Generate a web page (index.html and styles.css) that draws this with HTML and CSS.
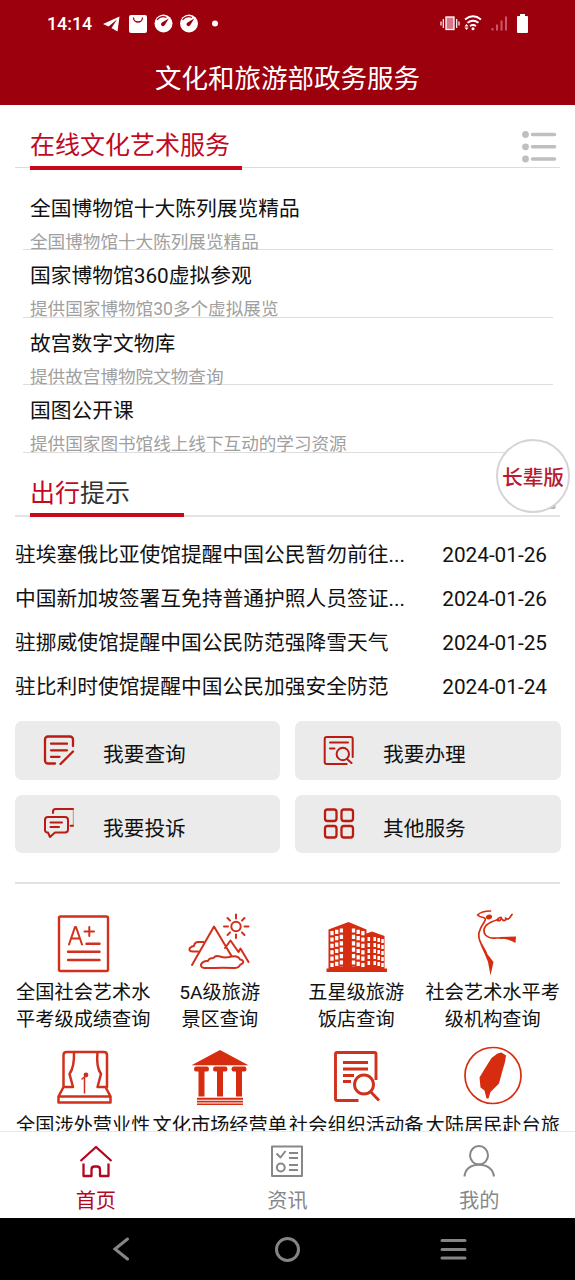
FILE: index.html
```html
<!DOCTYPE html>
<html lang="zh-CN">
<head>
<meta charset="utf-8">
<title>文化和旅游部政务服务</title>
<link rel="stylesheet" href="styles.css">
</head>
<body>
<div class="screen">
  <header class="header">
    <div class="status">
      <span class="clock">14:14</span>
      <svg class="status-left" width="120" height="24" viewBox="100 11 120 24">
        <path fill="#fff" d="M103 24 119.500 16.500 117.500 31.500 111.500 28 117 19.500 108.500 26.500Z"/>
        <rect x="129" y="15" width="18" height="18" rx="2" fill="#fff"/>
        <path d="M133.500 17.500a4.500 4.500 0 0 0 9 0" fill="none" stroke="#9c000d" stroke-width="1.300"/>
        <g id="gauge"><circle cx="163.500" cy="23.500" r="9" fill="#fff"/>
        <path d="M157 20a8 8 0 0 1 9.500-2.500" fill="none" stroke="#9c000d" stroke-width="1.200"/>
        <path d="M168.800 18.500 164.800 25a2 2 0 1 1-2.800-2.600Z" fill="#9c000d"/></g>
        <use href="#gauge" x="25.500"/>
        <circle cx="215" cy="23.500" r="3" fill="#fff"/>
      </svg>
      <svg class="status-right" width="90" height="24" viewBox="439 11 90 24">
        <rect x="446" y="17" width="8" height="12.500" fill="#d7788a" stroke="#fff" stroke-width="1.300"/>
        <path d="M443.300 19v9M441 21.500v4M456.700 19v9M459 21.500v4" stroke="#fff" stroke-width="1.200"/>
        <path d="M465 19.500q8-6.500 16 0M467.500 22.800q5.500-4 11 0M470 26q3-2 6 0" fill="none" stroke="#fff" stroke-width="1.900"/>
        <circle cx="473" cy="28.800" r="1.500" fill="#fff"/>
        <path d="M464.500 26.500l2-2.500 2 2.500ZM464.500 27.500l2 2.500 2-2.500Z" fill="#fff"/>
        <path d="M492.500 28v2.500M497 24.500v6M501.500 20.500v10M506 16.500v14" stroke="#c9566a" stroke-width="2"/>
        <path d="M517 17a1 1 0 0 1 1-1h2v-2h5v2h2a1 1 0 0 1 1 1v15a1 1 0 0 1-1 1h-9a1 1 0 0 1-1-1Z" fill="#fff"/>
      </svg>
    </div>
    <h1 class="title">文化和旅游部政务服务</h1>
  </header>

  <main class="content">
    <div class="section-head">
      <h2 class="section-title wide red">在线文化艺术服务</h2>
      <svg class="more" width="36" height="34" viewBox="521 130 36 34">
        <g fill="#bfbfbf"><circle cx="525.500" cy="134.500" r="3.400"/><circle cx="525.500" cy="146.800" r="3.400"/><circle cx="525.500" cy="159" r="3.400"/></g>
        <path d="M532.500 134.500h22M532.500 146.800h22M532.500 159h22" stroke="#bfbfbf" stroke-width="3.600" stroke-linecap="round"/>
      </svg>
    </div>
    <ul class="services">
      <li><b>全国博物馆十大陈列展览精品</b><span>全国博物馆十大陈列展览精品</span></li>
      <li><b>国家博物馆360虚拟参观</b><span>提供国家博物馆30多个虚拟展览</span></li>
      <li><b>故宫数字文物库</b><span>提供故宫博物院文物查询</span></li>
      <li><b>国图公开课</b><span>提供国家图书馆线上线下互动的学习资源</span></li>
    </ul>

    <div class="section-head travel">
      <h2 class="section-title"><span class="red">出行</span>提示</h2>
      <svg class="corner" width="8" height="5" viewBox="0 0 8 5"><path d="M0 4 4 0h3.500v3l-1 1Z" fill="#b4b4b4"/></svg>
    </div>
    <ul class="news">
      <li><span>驻埃塞俄比亚使馆提醒中国公民暂勿前往...</span><time>2024-01-26</time></li>
      <li><span>中国新加坡签署互免持普通护照人员签证...</span><time>2024-01-26</time></li>
      <li><span>驻挪威使馆提醒中国公民防范强降雪天气</span><time>2024-01-25</time></li>
      <li><span>驻比利时使馆提醒中国公民加强安全防范</span><time>2024-01-24</time></li>
    </ul>

    <div class="actions">
      <div class="action">
        <svg class="action-icon" viewBox="42 734 34 34"><path d="M73 746v-6.500a3 3 0 0 0-3-3H48a3 3 0 0 0-3 3v21a3 3 0 0 0 3 3h7M51 743.700h16M51 750.300h16M51 756.800h8.500M60.500 764l12.500-12.500"/></svg>
        <span>我要查询</span>
      </div>
      <div class="action">
        <svg class="action-icon thin" viewBox="322 734 34 34"><path d="M352.700 757v-18a2 2 0 0 0-2-2h-24a2 2 0 0 0-2 2v23a2 2 0 0 0 2 2h20M330 742.500h18M330 748.500h4.500M347.500 759.500l4 3.500"/><circle cx="342.800" cy="754" r="6.200"/></svg>
        <span>我要办理</span>
      </div>
      <div class="action">
        <svg class="action-icon" viewBox="42 807.500 34 34"><path class="fine" d="M53 813.500v-1.500a2.500 2.500 0 0 1 2.500-2.500h17.500M70.500 826.300h2.500"/><path class="faint" d="M73.300 810v16"/><path class="fine" d="M48 817.500h17a3 3 0 0 1 3 3v9.500a3 3 0 0 1-3 3H55l-5 4.500-2-4.500h-1a2.500 2.500 0 0 1-2-3v-9.500a3 3 0 0 1 3-3ZM50.500 823h11.500M50.500 827.500h8.500"/></svg>
        <span>我要投诉</span>
      </div>
      <div class="action">
        <svg class="action-icon" viewBox="322 807.500 34 34"><rect x="325" y="810" width="11.500" height="11.500" rx="2.500"/><rect x="341.500" y="810" width="11.500" height="11.500" rx="2.500"/><rect x="325" y="826.500" width="11.500" height="11.500" rx="2.500"/><rect x="341.500" y="826.500" width="11.500" height="11.500" rx="2.500"/></svg>
        <span>其他服务</span>
      </div>
    </div>

    <div class="grid">
      <div class="cell">
        <svg class="cell-icon" viewBox="49 909 68 68"><rect x="59" y="916.500" width="49" height="54.500" rx="1.500"/><path class="w2" d="M69 944.500 75 927h1l6 17.500M71.500 938.500h8.500M84.500 931.500h9.500M89.300 927v9"/><path d="M86.500 943.700h13M68 951.700h31.500M68 960h31.500"/></svg>
        <span>全国社会艺术水<br>平考级成绩查询</span>
      </div>
      <div class="cell">
        <svg class="cell-icon w2" viewBox="185.500 909 68 68"><circle cx="235.500" cy="926.500" r="4.700"/><path d="M235.500 914.500v4M235.500 934.500v3.500M223.500 926.500h4M244 926.500h4M227 918l2.500 2.500M241.500 932.500l2.500 2.500M227 935l2.500-2.500M241.500 920.500l2.500-2.500"/><path d="M191.500 965 213.500 926.500 231 956M203 942h-5q-4 0-4.500 4-5 1-4.500 4 .5 1.500 3 1.500h5.500M224.500 948l5.500-7.500 8 11.500 2-3.500 8 13.500"/><path d="M204 968q-4-.5-3.500-3.500 2-4 7-3.500 1-3 5.500-3 2-3 6.500-1.500 5 1.500 9 .5 9-2.500 11 2.500 4 .5 3 3.500l-3 2q-1 3-6 3-13-.5-19 0Z"/></svg>
        <span>5A级旅游<br>景区查询</span>
      </div>
      <div class="cell">
        <svg class="cell-icon solid" viewBox="322 909 68 68">
          <path d="M328.500 929.500 348.500 922 366.500 929.500V933.500L372 931.500 384.500 936V968.500h2.500v3.500h-60.500v-3.500h2Z"/>
          <g class="windows">
            <path d="M332 931v36M336.700 929.700v37.300M341.400 928.400v38.600M353.500 928.400v38.600M358.200 929.700v37.300M362.900 931v36"/>
            <path class="small" d="M368.800 937v30M374.700 937v30M378.700 938v29M382.500 939v28"/>
          </g>
        </svg>
        <span>五星级旅游<br>饭店查询</span>
      </div>
      <div class="cell">
        <svg class="cell-icon solid" viewBox="458.500 909 68 68">
          <ellipse cx="488.500" cy="917" rx="3.200" ry="2.300" transform="rotate(-15 488.500 917)"/>
          <g class="ribbon">
            <path d="M490 911q-9 0-13 4 2 2 6 2.500 3 1 1 4-4 6-5.500 11-1 5 2 11l5 9"/>
            <path d="M498 919.500q-8 2-12.500 6-4 5-.5 9.500 4 4 11 3l6 0"/>
            <path d="M496.500 920q3 2 4-1 1-2-1-1.500-3 1-2.500 2.500M502 919.500q1 2 3 .5 1-1 0-2 2 2 4 0l2.500-3.500"/>
          </g>
          <path d="M499 937 515.500 936.500 515 943Q509 939 499 938.500ZM479.500 944Q489 957 493 962L490 975.500 487.500 962Q484 953 479.500 944Z"/>
        </svg>
        <span>社会艺术水平考<br>级机构查询</span>
      </div>
      <div class="cell">
        <svg class="cell-icon" viewBox="49 1042 68 68"><path class="w25" d="M63.500 1087v-32q0-3 3-3h37.500q3 0 3 3v32M63.500 1087l-5 9.500v6h52v-6l-5-9.500M58.500 1096.500h52M63.500 1087h9.500L69.500 1074q5-7 4.500-22M107 1087h-9.500l3.500-13q-5-7-3.500-22"/><path class="w15" d="M84.500 1093v-15M82 1079l3-2.500"/><circle class="dot" cx="86" cy="1075" r="2.400"/></svg>
        <span>全国涉外营业性</span>
      </div>
      <div class="cell">
        <svg class="cell-icon solid" viewBox="185.500 1042 68 68"><path d="M191 1065.300 219.500 1050 248 1065.300ZM195.500 1066.500h11q2 0 2 2.500t-2 2.500H204v25h-6v-25h-2.500q-2 0-2-2.500t2-2.500ZM214.500 1066.500h10.500q2 0 2 2.500t-2 2.500h-2.500v25h-6v-25h-2q-2 0-2-2.500t2-2.500ZM233 1066.500h11q2 0 2 2.500t-2 2.500h-2.500v25h-6v-25H233q-2 0-2-2.500t2-2.500ZM196.500 1097.800h46v2h-46ZM196.500 1100.800h46v1.800h-46ZM196.500 1103.600h46v1.500h-46Z"/></svg>
        <span>文化市场经营单</span>
      </div>
      <div class="cell">
        <svg class="cell-icon w3" viewBox="322 1042 68 68"><path d="M376 1080v-26q0-1.500-1.500-1.500H337q-1.500 0-1.500 1.500v45q0 1.500 1.500 1.500h21.500"/><path d="M343 1062.500h25M343 1069h25M343 1075.500h11M343 1081.500h8M370.500 1091.500l8.500 9"/><circle cx="364" cy="1084.500" r="9.500"/></svg>
        <span>社会组织活动备</span>
      </div>
      <div class="cell">
        <svg class="cell-icon solid" viewBox="458.500 1042 68 68"><circle cx="492.500" cy="1075.500" r="28" fill="none" stroke="#d62d10" stroke-width="1.700"/><path d="M501 1052.500 505.500 1055.500 504.500 1062 502 1070.500 498.500 1083.500 490 1092 488 1098.500H486L484 1090.500 480 1087.500 479 1077.500 485 1067.500 491 1058 497 1053.500Z"/></svg>
        <span>大陆居民赴台旅</span>
      </div>
    </div>
  </main>

  <nav class="tabs">
    <div class="tab active"><svg viewBox="78 1144 36 36"><path d="M80.500 1161 96 1147 111.500 1161M83.500 1163.500v12.500h8v-6.500q0-3 3-3h2.500q3 0 3 3v6.500h8.500v-12.500"/></svg><span>首页</span></div>
    <div class="tab"><svg viewBox="269.500 1144 36 36"><path d="M272.500 1146.500h30v29.500h-30ZM277 1153.500l4 4 5-6.500M289.500 1153h9M289.500 1158h9M289.500 1165h9M289.500 1170h9"/><circle cx="281.300" cy="1167.500" r="3.900"/></svg><span>资讯</span></div>
    <div class="tab"><svg viewBox="461 1144 36 36"><ellipse cx="479" cy="1155.300" rx="9" ry="9.300"/><path d="M464.500 1176.500q1-11 14.500-12 13.500 1 15 12"/></svg><span>我的</span></div>
  </nav>
  <div class="system">
    <svg width="24" height="24" viewBox="0 0 24 24"><path d="M18.500 2 6 12l12.500 10"/></svg>
    <svg width="28" height="28" viewBox="-1.500 -.5 28 28"><circle cx="14" cy="14" r="11"/></svg>
    <svg width="28" height="24" viewBox="0 0 28 24"><path d="M3 3.500h23M3 12.500h23M3 21h23"/></svg>
  </div>
  <div class="elder">长辈版</div>
</div>
</body>
</html>
```
FILE: styles.css
```css
* { box-sizing: border-box; margin: 0; padding: 0; }
body { background: #fff; color: #111; font-family: Roboto, "Noto Sans CJK SC", sans-serif; }
ul { list-style: none; }
svg { display: block; flex: none; }

.screen { position: relative; display: flex; flex-direction: column; width: 575px; height: 1280px; overflow: hidden; }

.header { flex: none; height: 105px; background: #9c000d; color: #fff; }
.status { display: flex; align-items: center; height: 46px; padding: 0 46px 0 47px; }
.clock { width: 53px; padding-top: 1px; font-size: 17.800px; font-weight: 500; line-height: 24px; }
.status-right { margin-left: auto; }
.title { height: 64px; padding-top: 1px; font-size: 26.500px; font-weight: 400; line-height: 64px; text-align: center; }

.content { flex: 1; min-height: 0; overflow: hidden; padding: 0 15px; }

.section-head { display: flex; justify-content: space-between; align-items: flex-start; height: 63px; border-bottom: 1px solid #dcdcdc; }
.section-title { width: 154px; height: 64.500px; margin-left: 15px; padding-top: 21.500px; border-bottom: 4.500px solid #c8081b; color: #333; font-size: 25px; font-weight: 400; line-height: 38px; white-space: nowrap; }
.section-title.wide { width: 212px; }
.red { color: #c1091f; }
.section-title.red { color: #c1091f; }
.more { margin: 25px 3px 0 0; }

.services { padding: 14.500px 7px 0 8px; }
.services li { display: flex; flex-direction: column; height: 67.600px; padding: 10px 0 0 7px; border-bottom: 1px solid #dedede; white-space: nowrap; }
.services b { height: 32px; font-size: 20.750px; font-weight: 400; line-height: 32px; }
.services span { margin-top: 4px; color: #a0a0a0; font-size: 17.600px; line-height: 26px; }

.travel { height: 64px; border-bottom: 2px solid #e4e4e4; }
.travel .section-title { height: 64px; padding-top: 22px; }
.corner { margin: 52px 4px 0 0; }

.news { padding-top: 16.500px; }
.news li { display: flex; justify-content: space-between; height: 44px; padding-right: 13px; font-size: 20.750px; line-height: 44px; white-space: nowrap; }

.actions { display: grid; grid-template-columns: 265px 266px; grid-auto-rows: 58.500px; gap: 15px; padding: 12px 0 29px; border-bottom: 2px solid #e2e2e2; }
.action { display: flex; align-items: center; padding-left: 27px; border-radius: 7px; background: #ebebeb; font-size: 20.700px; }
.action span { padding-top: 5px; }
.action-icon { width: 34px; height: 34px; margin-right: 27px; fill: none; stroke: #b81c12; stroke-width: 2.300; stroke-linecap: round; stroke-linejoin: round; }
.action-icon.thin, .fine { stroke-width: 2; }
.faint { stroke-width: .8; opacity: .6; }

.grid { display: grid; grid-template-columns: repeat(4, 136.500px); grid-auto-rows: 133px; padding-top: 25px; }
.cell { display: flex; flex-direction: column; align-items: center; font-size: 19.200px; line-height: 27px; text-align: center; white-space: nowrap; }
.cell span { margin-top: 1.500px; }
.cell-icon { width: 68px; height: 68px; fill: none; stroke: #d0301c; stroke-width: 2.400; stroke-linejoin: round; stroke-linecap: round; }
.w2 { stroke-width: 2; }
.w25 { stroke-width: 2.500; }
.w15 { stroke-width: 1.500; }
.w3 { stroke-width: 2.900; stroke-linecap: butt; }
.cell-icon.solid { fill: #d62d10; stroke: none; stroke-linecap: butt; }
.windows { fill: none; stroke: #fff; stroke-width: 3.300; stroke-dasharray: 4.200 2.200; }
.windows .small { stroke-width: 2.500; stroke-dasharray: 4 2; }
.ribbon { fill: none; stroke: #d62d10; stroke-width: 1.700; stroke-linecap: round; }
.dot { fill: #d0301c; stroke: none; }

.tabs { flex: none; display: grid; grid-template-columns: repeat(3, 1fr); height: 87px; border-top: 1px solid #e8e8e8; background: #fff; }
.tab { display: flex; flex-direction: column; align-items: center; padding-top: 12px; color: #87878a; font-size: 20.200px; line-height: 30px; }
.tab svg { width: 36px; height: 36px; fill: none; stroke: #87878a; stroke-width: 2; stroke-linejoin: round; }
.tab span { margin-top: 6px; }
.tab.active { color: #b3061f; }
.tab.active svg { stroke: #b3061f; stroke-width: 2.300; }

.system { flex: none; display: flex; align-items: center; justify-content: space-between; height: 62px; padding: 0 108px 0 109px; background: #000; }
.system svg { fill: none; stroke: #858585; stroke-width: 3; stroke-linecap: round; }

.elder { position: absolute; left: 496px; top: 439px; width: 74px; height: 74px; border: 2px solid #d5d5d9; border-radius: 50%; background: #fff; color: #b81a30; font-size: 20.700px; font-weight: 500; line-height: 75px; text-align: center; white-space: nowrap; }
```
